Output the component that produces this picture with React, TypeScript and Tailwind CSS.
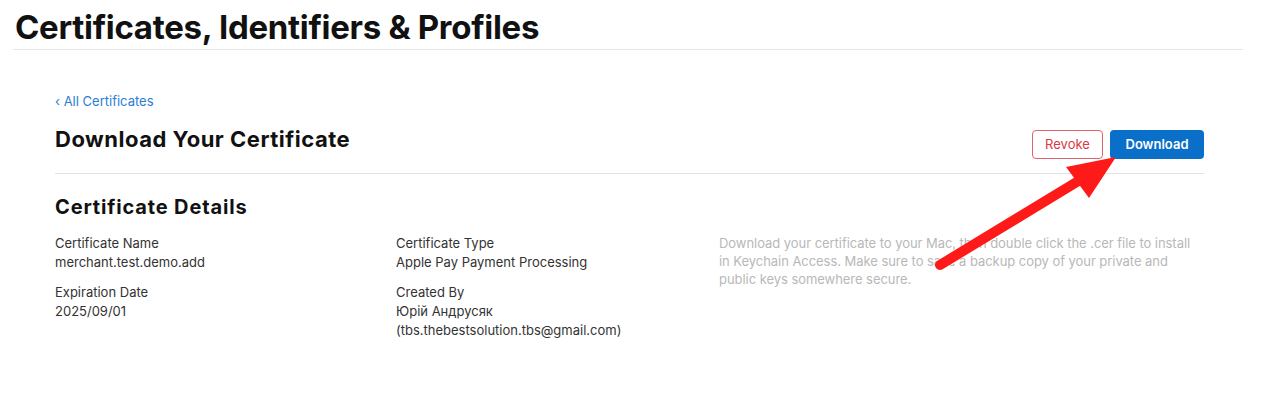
import React from "react";

function Field({ label, children }: { label: string; children: React.ReactNode }) {
  return (
    <div className="mb-[11px]">
      <p className="text-[13px] leading-[19px] text-[#333]">{label}</p>
      <p className="text-[13px] leading-[19px] text-[#333]">{children}</p>
    </div>
  );
}

export default function App() {
  return (
    <div className="relative h-[396px] w-[1280px] overflow-hidden bg-white font-['Inter',sans-serif] antialiased">
      <header className="mx-[13px] w-[1230px] border-b border-[#e5e5e5] pt-[8px] pb-[3px]">
        <h1 className="pl-[2px] text-[33px] font-bold leading-[38px] tracking-[-0.3px] text-[#111]">
          Certificates, Identifiers &amp; Profiles
        </h1>
      </header>

      <main className="ml-[55px] w-[1149px] pt-[38px]">
        <a className="text-[13px] leading-[16px] text-[#2b7ed4]">‹ All Certificates</a>

        <div className="mt-[13px] flex items-start justify-between border-b border-[#e3e3e3] pb-[14px]">
          <h2 className="text-[22px] font-bold leading-[28px] tracking-[0.5px] text-[#111]">
            Download Your Certificate
          </h2>
          <div className="mt-[5px] flex gap-[7px]">
            <button className="h-[29px] w-[71px] rounded-[4px] border border-[#e0646c] text-[13px] text-[#d93a43]">
              Revoke
            </button>
            <button className="h-[29px] w-[94px] rounded-[4px] bg-[#0a6fc9] text-[13px] font-semibold text-white">
              Download
            </button>
          </div>
        </div>

        <h3 className="mt-[20px] text-[20px] font-bold leading-[26px] tracking-[0.85px] text-[#111]">
          Certificate Details
        </h3>

        <div className="mt-[14px] grid grid-cols-[341px_323px_480px]">
          <div>
            <Field label="Certificate Name">merchant.test.demo.add</Field>
            <Field label="Expiration Date">2025/09/01</Field>
          </div>
          <div>
            <Field label="Certificate Type">Apple Pay Payment Processing</Field>
            <Field label="Created By">
              Юрій Андрусяк
              <br />
              (tbs.thebestsolution.tbs@gmail.com)
            </Field>
          </div>
          <p className="text-[13px] leading-[18px] tracking-[-0.05px] text-[#b8b8b8]">
            Download your certificate to your Mac, then double click the .cer file to install in Keychain Access. Make sure to save a backup copy of your private and public keys somewhere secure.
          </p>
        </div>
      </main>

      <svg className="pointer-events-none absolute left-0 top-0" width="1280" height="396">
        <line x1="940" y1="265" x2="1080" y2="180" stroke="#ff1a1a" strokeWidth="10" strokeLinecap="round" />
        <polygon points="1116,157 1066,167 1089,198" fill="#ff1a1a" />
      </svg>
    </div>
  );
}
